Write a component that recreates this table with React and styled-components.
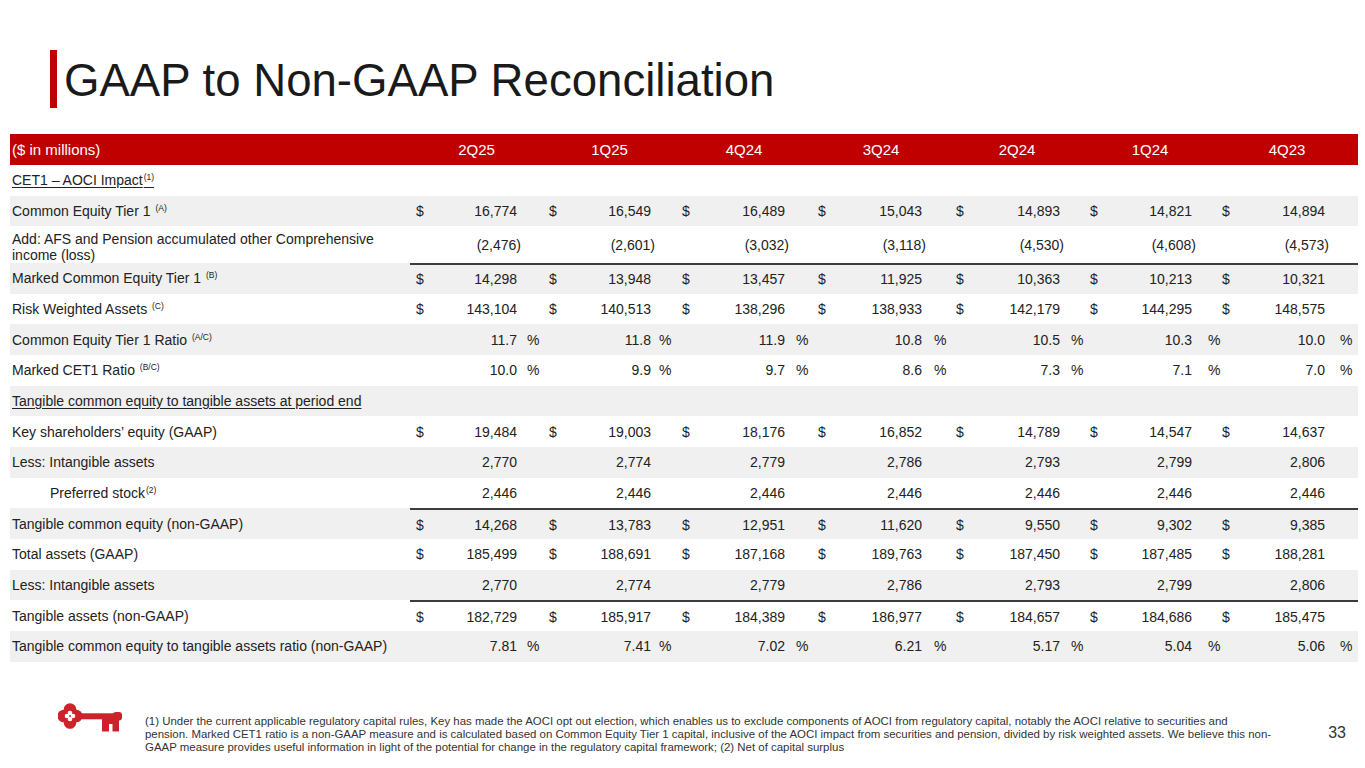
import React from 'react'
import styled, { createGlobalStyle, css } from 'styled-components'

const GlobalStyle = createGlobalStyle`
  html, body {
    margin: 0;
    padding: 0;
    background: #ffffff;
  }
  body {
    font-family: "Liberation Sans", Arial, sans-serif;
    color: #222222;
  }
`

const template = '400px 30px 77px 26px 30px 78px 25px 30px 79px 27px 30px 80px 28px 31px 79px 24px 30px 78px 24px 30px 79px 33px'

const columns = [
  { head: '2Q25', pad: 10 },
  { head: '1Q25', pad: 8 },
  { head: '4Q24', pad: 11 },
  { head: '3Q24', pad: 12 },
  { head: '2Q24', pad: 11 },
  { head: '1Q24', pad: 16 },
  { head: '4Q23', pad: 15 },
]

const rows = [
  { section: true, label: 'CET1 – AOCI Impact', sup: '(1)' },
  { label: 'Common Equity Tier 1 ', sup: '(A)', gray: true, unit: '$', values: ['16,774', '16,549', '16,489', '15,043', '14,893', '14,821', '14,894'] },
  { label: ['Add: AFS and Pension accumulated other Comprehensive', 'income (loss)'], tall: true, values: ['(2,476)', '(2,601)', '(3,032)', '(3,118)', '(4,530)', '(4,608)', '(4,573)'] },
  { label: 'Marked Common Equity Tier 1 ', sup: '(B)', gray: true, rule: true, unit: '$', values: ['14,298', '13,948', '13,457', '11,925', '10,363', '10,213', '10,321'] },
  { label: 'Risk Weighted Assets ', sup: '(C)', unit: '$', values: ['143,104', '140,513', '138,296', '138,933', '142,179', '144,295', '148,575'] },
  { label: 'Common Equity Tier 1 Ratio ', sup: '(A/C)', gray: true, pct: true, values: ['11.7', '11.8', '11.9', '10.8', '10.5', '10.3', '10.0'] },
  { label: 'Marked CET1 Ratio ', sup: '(B/C)', pct: true, values: ['10.0', '9.9', '9.7', '8.6', '7.3', '7.1', '7.0'] },
  { section: true, gray: true, label: 'Tangible common equity to tangible assets at period end' },
  { label: 'Key shareholders’ equity (GAAP)', unit: '$', values: ['19,484', '19,003', '18,176', '16,852', '14,789', '14,547', '14,637'] },
  { label: 'Less: Intangible assets', gray: true, values: ['2,770', '2,774', '2,779', '2,786', '2,793', '2,799', '2,806'] },
  { label: 'Preferred stock', sup: '(2)', indent: true, values: ['2,446', '2,446', '2,446', '2,446', '2,446', '2,446', '2,446'] },
  { label: 'Tangible common equity (non-GAAP)', gray: true, rule: true, unit: '$', values: ['14,268', '13,783', '12,951', '11,620', '9,550', '9,302', '9,385'] },
  { label: 'Total assets (GAAP)', unit: '$', values: ['185,499', '188,691', '187,168', '189,763', '187,450', '187,485', '188,281'] },
  { label: 'Less: Intangible assets', gray: true, values: ['2,770', '2,774', '2,779', '2,786', '2,793', '2,799', '2,806'] },
  { label: 'Tangible assets (non-GAAP)', rule: true, unit: '$', values: ['182,729', '185,917', '184,389', '186,977', '184,657', '184,686', '185,475'] },
  { label: 'Tangible common equity to tangible assets ratio (non-GAAP)', gray: true, pct: true, values: ['7.81', '7.41', '7.02', '6.21', '5.17', '5.04', '5.06'] },
]

const Page = styled.div`
  width: 1365px;
  height: 768px;
  overflow: hidden;
  display: flex;
  flex-direction: column;
  padding-top: 50px;
  box-sizing: border-box;
`

const Title = styled.h1`
  margin: 0 0 0 50px;
  height: 58px;
  border-left: 7px solid #c00000;
  padding-left: 7px;
  font-size: 45.6px;
  font-weight: 400;
  line-height: 62px;
  color: #1a1a1a;
  white-space: nowrap;
`

const Table = styled.div`
  margin: 26px 0 0 10px;
  width: 1348px;
`

const Row = styled.div`
  display: grid;
  grid-template-columns: ${template};
  height: ${p => (p.tall ? '36.5px' : '30.7px')};
  background: ${p => (p.gray ? '#f0f0f0' : '#ffffff')};
  font-size: 14px;
  color: #222222;
  ${p => p.rule && css`
    & > *:not(:first-child) {
      border-top: 2px solid #3c3c3c;
    }
  `}
`

const HeadRow = styled(Row)`
  height: 31px;
  background: #c00000;
  color: #ffffff;
  font-size: 15px;
`

const Cell = styled.div`
  display: flex;
  align-items: center;
  box-sizing: border-box;
  white-space: nowrap;
`

const Label = styled(Cell)`
  padding-left: ${p => (p.indent ? '40px' : '2px')};
  padding-top: ${p => (p.tall ? '4px' : '0')};
  line-height: 16px;
`

const Section = styled.span`
  text-decoration: underline;
  text-underline-offset: 2px;
`

const HeadCell = styled(Cell)`
  grid-column: span 3;
  justify-content: center;
`

const Dollar = styled(Cell)`
  padding-left: 6px;
`

const Num = styled(Cell)`
  justify-content: flex-end;
`

const Neg = styled.span`
  margin-right: -4px;
`

const Pct = styled(Cell)`
  padding-left: ${p => p.pad}px;
`

const Sup = styled.sup`
  font-size: 8.5px;
  line-height: 0;
  vertical-align: 5px;
  margin-left: 1px;
`

const Footer = styled.div`
  margin-top: 41px;
  display: flex;
  align-items: flex-start;
`

const KeyMark = styled.svg`
  margin-left: 58px;
  flex: none;
`

const Note = styled.div`
  margin-left: 23px;
  margin-top: 12px;
  font-size: 11.45px;
  line-height: 13px;
  color: #333333;
`

const NoteLine = styled.div`
  white-space: nowrap;
`

const PageNo = styled.div`
  margin-left: auto;
  margin-right: 19px;
  margin-top: 21px;
  font-size: 16px;
  color: #333333;
`

function KeyLogo() {
  return (
    <KeyMark width="64" height="30" viewBox="0 0 64 30">
      <g fill="#cc2229">
        <circle cx="12" cy="6.5" r="6.3" />
        <circle cx="12" cy="19.5" r="6.3" />
        <circle cx="5.8" cy="13" r="6.3" />
        <circle cx="18.2" cy="13" r="6.3" />
        <rect x="20" y="10.3" width="40" height="6" />
        <rect x="55" y="9" width="9" height="8.6" rx="3" />
        <rect x="44" y="16" width="17" height="5" />
        <rect x="44" y="16" width="7" height="12.5" />
        <rect x="54.5" y="16" width="6.5" height="12.5" />
      </g>
      <g fill="#ffffff">
        <circle cx="12" cy="10" r="2.3" />
        <circle cx="12" cy="16" r="2.3" />
        <circle cx="9" cy="13" r="2.3" />
        <circle cx="15" cy="13" r="2.3" />
      </g>
    </KeyMark>
  )
}

function DataCells({ row }) {
  return columns.map((c, i) => {
    const v = row.values ? row.values[i] : ''
    const neg = v.startsWith('(')
    return (
      <React.Fragment key={c.head}>
        <Dollar>{row.unit}</Dollar>
        <Num>{neg ? <Neg>{v}</Neg> : v}</Num>
        <Pct pad={c.pad}>{row.pct ? '%' : ''}</Pct>
      </React.Fragment>
    )
  })
}

export default function App() {
  return (
    <Page>
      <GlobalStyle />
      <Title>GAAP to Non-GAAP Reconciliation</Title>
      <Table>
        <HeadRow>
          <Label>($ in millions)</Label>
          {columns.map(c => (
            <HeadCell key={c.head}>{c.head}</HeadCell>
          ))}
        </HeadRow>
        {rows.map((r, i) => (
          <Row key={i} gray={r.gray} tall={r.tall} rule={r.rule}>
            <Label indent={r.indent} tall={r.tall}>
              {r.section ? (
                <Section>
                  {r.label}
                  {r.sup && <Sup>{r.sup}</Sup>}
                </Section>
              ) : Array.isArray(r.label) ? (
                <span>
                  {r.label[0]}
                  <br />
                  {r.label[1]}
                </span>
              ) : (
                <span>
                  {r.label}
                  {r.sup && <Sup>{r.sup}</Sup>}
                </span>
              )}
            </Label>
            <DataCells row={r} />
          </Row>
        ))}
      </Table>
      <Footer>
        <KeyLogo />
        <Note>
          <NoteLine>(1) Under the current applicable regulatory capital rules, Key has made the AOCI opt out election, which enables us to exclude components of AOCI from regulatory capital, notably the AOCI relative to securities and</NoteLine>
          <NoteLine>pension. Marked CET1 ratio is a non-GAAP measure and is calculated based on Common Equity Tier 1 capital, inclusive of the AOCI impact from securities and pension, divided by risk weighted assets. We believe this non-</NoteLine>
          <NoteLine>GAAP measure provides useful information in light of the potential for change in the regulatory capital framework; (2) Net of capital surplus</NoteLine>
        </Note>
        <PageNo>33</PageNo>
      </Footer>
    </Page>
  )
}
